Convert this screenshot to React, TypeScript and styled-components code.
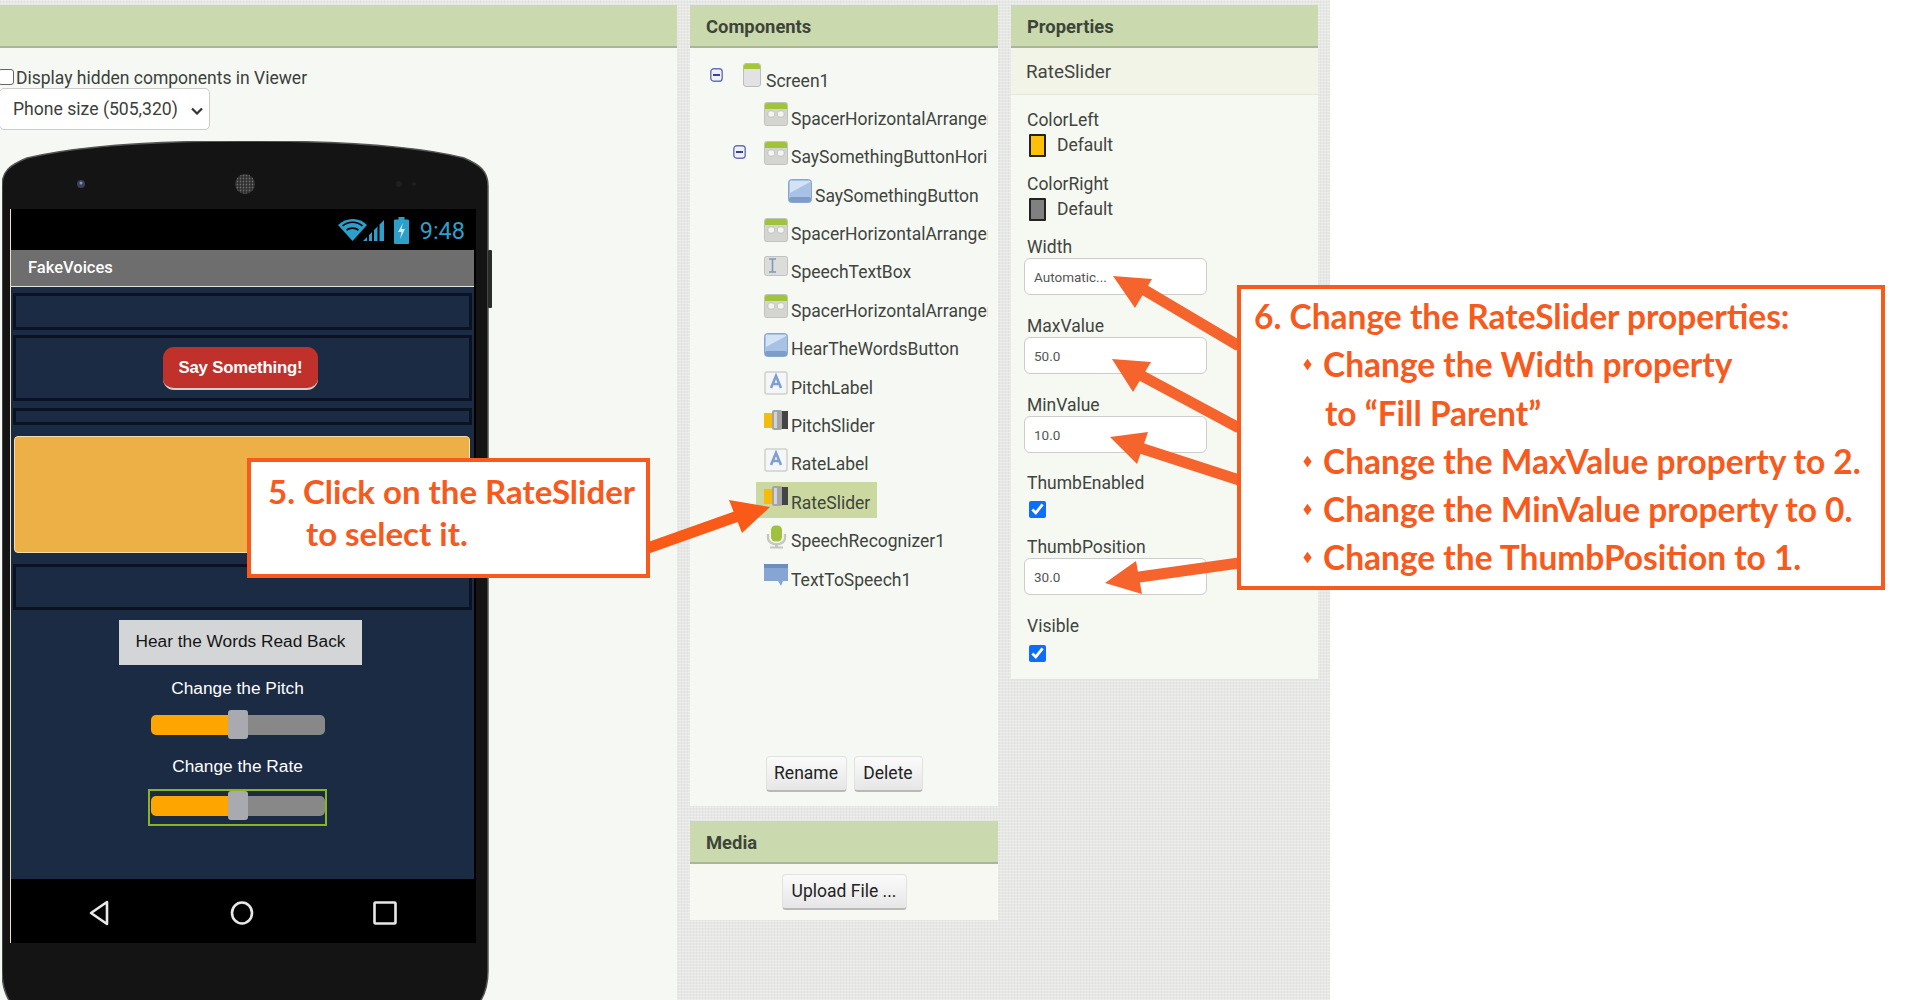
import React from "react";
import styled, { createGlobalStyle, css } from "styled-components";

const Global = createGlobalStyle`
  html, body { margin: 0; padding: 0; background: #fff; }
  #root { width: 1926px; height: 1000px; overflow: hidden; }
  * { box-sizing: border-box; }
`;

const Page = styled.div`
  position: relative;
  width: 1926px;
  height: 1000px;
  overflow: hidden;
  background: #fff;
  font-family: Roboto, "Liberation Sans", sans-serif;
  color: #3f4440;
`;

const Workspace = styled.div`
  width: 1330px;
  height: 1000px;
  padding-top: 5px;
  display: flex;
  align-items: flex-start;
  background-color: #e7e7e5;
  background-image:
    repeating-linear-gradient(0deg, rgba(255,255,255,.28) 0 1px, transparent 1px 3px),
    repeating-linear-gradient(90deg, rgba(150,150,150,.07) 0 1px, transparent 1px 3px);
`;

const Column = styled.div<{ $w: number; $ml?: number }>`
  width: ${p => p.$w}px;
  margin-left: ${p => p.$ml ?? 0}px;
  display: flex;
  flex-direction: column;
`;

const PanelHeader = styled.div`
  height: 43px;
  padding: 1px 0 0 16px;
  display: flex;
  align-items: center;
  background: #cbd9ae;
  border-bottom: 2px solid #aab697;
  font-size: 18.4px;
  font-weight: 700;
  color: #3d4539;
`;

const PanelBody = styled.div<{ $h?: number }>`
  background: #f6f9f3;
  ${p => p.$h !== undefined && css`height: ${p.$h}px;`}
`;

/* Viewer */
const ViewerBody = styled(PanelBody)`
  height: 960px;
  padding-top: 20px;
  overflow: hidden;
`;

const HiddenRow = styled.label`
  display: flex;
  align-items: center;
  height: 20px;
  font-size: 17.5px;
  color: #3b3f3c;
`;

const HiddenCheck = styled.input`
  width: 16px;
  height: 16px;
  margin: 0 2px 2px -2px;
  appearance: none;
  background: #fff;
  border: 1px solid #666;
  border-radius: 3px;
`;

const SizeSelect = styled.select`
  display: block;
  margin: 0 0 0 -1px;
  width: 211px;
  height: 42px;
  padding-left: 13px;
  appearance: none;
  background: #fff url("data:image/svg+xml,%3Csvg xmlns='http://www.w3.org/2000/svg' width='12' height='8'%3E%3Cpath d='M1 1.5l5 5 5-5' fill='none' stroke='%23333' stroke-width='2.2'/%3E%3C/svg%3E") no-repeat 191px 18px;
  border: 1px solid #ccc;
  border-radius: 5px;
  font: 17.6px Roboto, sans-serif;
  color: #3b3f3c;
`;

const Phone = styled.div`
  position: relative;
  margin: 11px 0 0 2px;
  width: 490px;
  height: 880px;
  padding: 68px 0 0 8px;
`;

const PhoneShell = styled.svg`
  position: absolute;
  left: 0;
  top: 0;
`;

const Screen = styled.div`
  position: relative;
  width: 466px;
  background: #000;
  border-left: 1px solid #e7e4bd;
`;

const StatusBar = styled.div`
  height: 41px;
  padding: 2px 11px 0 0;
  display: flex;
  align-items: center;
  justify-content: flex-end;
  gap: 8px;
`;

const Clock = styled.span`
  font-size: 23.5px;
  color: #2d9fc9;
  margin-left: 3px;
`;

const TitleBar = styled.div`
  width: 463px;
  height: 37px;
  padding: 0 0 2px 17px;
  display: flex;
  align-items: center;
  background: #6e6e6e;
  border-bottom: 1px solid #e4e4e4;
  color: #fff;
  font-size: 16.5px;
  font-weight: 500;
`;

const AppBody = styled.div`
  width: 463px;
  height: 592px;
  padding-top: 6px;
  display: flex;
  flex-direction: column;
  background: #1b2b44;
`;

const Arrangement = styled.div<{ $h: number; $mb: number }>`
  height: ${p => p.$h}px;
  margin: 0 2px ${p => p.$mb}px 2px;
  padding-right: 4px;
  flex: none;
  display: flex;
  align-items: center;
  justify-content: center;
  background: #1b2b44;
  border: 3px solid #0b1322;
`;

const RedButton = styled.div`
  width: 155px;
  height: 43px;
  padding-top: 1px;
  display: flex;
  align-items: center;
  justify-content: center;
  background: #c1312c;
  border-radius: 11px;
  border-bottom: 2px solid #d8cfcb;
  color: #fff;
  font: 700 16.8px "Liberation Sans", sans-serif;
  letter-spacing: -0.2px;
`;

const OrangeBox = styled.div`
  height: 117px;
  margin: 0 4px 11px 3px;
  flex: none;
  background: #edb046;
  border: 1px solid #f3dcae;
  border-radius: 4px;
`;

const GrayButton = styled.div`
  width: 243px;
  height: 45px;
  margin: 10px 0 0 108px;
  padding-bottom: 2px;
  flex: none;
  display: flex;
  align-items: center;
  justify-content: center;
  background: #d4d5d7;
  color: #151515;
  font: 17.3px "Liberation Sans", sans-serif;
`;

const SliderCaption = styled.div<{ $mt: number }>`
  width: 179px;
  height: 20px;
  margin: ${p => p.$mt}px 0 0 137px;
  flex: none;
  text-align: center;
  color: #fff;
  font: 17.3px/20px "Liberation Sans", sans-serif;
`;

const SliderFrame = styled.div<{ $sel?: boolean; $mt: number }>`
  position: relative;
  width: 179px;
  height: 37px;
  margin: ${p => p.$mt}px 0 0 137px;
  flex: none;
  display: flex;
  align-items: center;
  justify-content: center;
  border: 2px solid ${p => (p.$sel ? "#8bb51e" : "transparent")};
`;

const Track = styled.div<{ $lift: number }>`
  position: relative;
  width: 174px;
  height: 20px;
  margin-top: ${p => -p.$lift}px;
  background: linear-gradient(90deg, #ffa500 0 45%, #888 45% 100%);
  border-radius: 5px;
`;

const Thumb = styled.div`
  position: absolute;
  left: 77px;
  top: -5px;
  width: 20px;
  height: 29px;
  background: #a9a9b0;
  border-radius: 3px;
`;

const NavBar = styled.div`
  height: 64px;
  padding: 3px 79px 0 76px;
  display: flex;
  align-items: center;
  justify-content: space-between;
  background: #000;
`;

/* Components */
const Tree = styled.div`
  padding-top: 14px;
  height: 708px;
`;

const TreeRow = styled.div<{ $indent: number }>`
  height: 38.4px;
  padding-left: ${p => p.$indent}px;
  display: flex;
  align-items: flex-start;
`;

const Toggle = styled.svg`
  flex: none;
  margin-top: 6px;
`;

const Node = styled.div<{ $sel?: boolean; $ml?: number }>`
  height: 36px;
  margin: -2px 0 0 ${p => p.$ml ?? 0}px;
  padding: 4px 7px 0 8px;
  display: flex;
  align-items: flex-start;
  background: ${p => (p.$sel ? "#cbd9a0" : "transparent")};
`;

const NodeLabel = styled.span<{ $w?: number; $gap: number }>`
  margin: 6.5px 0 0 ${p => p.$gap}px;
  font-size: 17.5px;
  line-height: 20px;
  color: #404440;
  white-space: nowrap;
  ${p => p.$w && css`width: ${p.$w}px; overflow: hidden;`}
`;

const Actions = styled.div`
  height: 50px;
  display: flex;
  justify-content: center;
  gap: 7px;
`;

const SoftButton = styled.button<{ $w: number }>`
  width: ${p => p.$w}px;
  height: 36px;
  padding: 0 0 2px;
  background: linear-gradient(#fbfbfb, #e6e6e6);
  border: 1px solid #e2e2e2;
  border-bottom: 2px solid #b9b9b9;
  border-radius: 4px;
  font: 17.5px Roboto, sans-serif;
  color: #222;
`;

const MediaGap = styled.div`
  height: 15px;
`;

const MediaBody = styled(PanelBody)`
  height: 56px;
  padding-top: 10px;
  display: flex;
  justify-content: center;
  background: #f6f8f1;
`;

/* Properties */
const SubHeader = styled.div`
  height: 47px;
  padding: 1px 0 0 15px;
  display: flex;
  align-items: center;
  background: #f1f4e6;
  border-bottom: 1px solid #e6e8dc;
  font-size: 18.8px;
  color: #444;
`;

const PropList = styled(PanelBody)`
  height: 585px;
  padding: 15px 14px 0;
  display: flex;
  flex-direction: column;
  border-bottom: 1px solid #e2e4dc;
  background: #f6f8f2;
`;

const PropLabel = styled.div<{ $mt?: number }>`
  height: 20px;
  margin: ${p => p.$mt ?? 0}px 0 0 2px;
  font-size: 17.5px;
  line-height: 20px;
  color: #404440;
  flex: none;
`;

const ColorRow = styled.div`
  height: 24px;
  margin-top: 3px;
  padding-left: 4px;
  display: flex;
  align-items: center;
  font-size: 17.5px;
  flex: none;
`;

const Swatch = styled.span<{ $c: string }>`
  width: 17px;
  height: 23px;
  margin-right: 11px;
  background: ${p => p.$c};
  border: 2px solid #222;
  border-radius: 1px;
`;

const PropInput = styled.input`
  flex: none;
  width: 183px;
  height: 37px;
  margin: 1px 0 1px -1px;
  padding: 0 9px;
  background: #fff;
  border: 1px solid #ccc;
  border-radius: 6px;
  font: 13.5px Roboto, sans-serif;
  color: #555;
`;

const PropCheck = styled.input<{ $mt: number }>`
  flex: none;
  width: 17px;
  height: 17px;
  margin: ${p => p.$mt}px 0 0 4px;
  accent-color: #0d6efd;
`;

/* Annotations */
const Arrows = styled.svg`
  position: absolute;
  left: 0;
  top: 0;
  pointer-events: none;
`;

const Callout = styled.div`
  position: absolute;
  background: #fff;
  border: 4px solid #f75a1c;
  color: #f75a1c;
  font-family: Lato, "Open Sans", sans-serif;
  font-weight: 700;
`;

const CalloutFive = styled(Callout)`
  left: 247px;
  top: 458px;
  width: 403px;
  height: 120px;
  padding: 8px 0 0 17px;
  line-height: 42px;
  font-size: 33px;
`;

const CalloutLine = styled.div<{ $indent?: number }>`
  padding-left: ${p => p.$indent ?? 0}px;
  white-space: nowrap;
`;

const CalloutSix = styled(Callout)`
  left: 1237px;
  top: 285px;
  width: 648px;
  height: 305px;
  padding: 3px 0 0 13px;
  line-height: 48.3px;
  font-size: 33.5px;
`;

const BulletLine = styled.div<{ $bare?: boolean }>`
  position: relative;
  padding-left: ${p => (p.$bare ? 71 : 69)}px;
  white-space: nowrap;
  ${p => !p.$bare && css`
    &::before {
      content: "";
      position: absolute;
      left: 50px;
      top: 21px;
      width: 7px;
      height: 7px;
      background: #f75a1c;
      transform: rotate(45deg) skew(10deg, 10deg);
    }
  `}
`;

/* Icons */
const Ic = styled.svg`
  flex: none;
  display: block;
`;

const ToggleIcon = () => (
  <Toggle width="13" height="14" viewBox="0 0 13 14">
    <rect x="0.8" y="0.8" width="11.4" height="12.4" rx="3" fill="#eef0fa" stroke="#6a70b8" strokeWidth="1.4" />
    <rect x="3" y="6" width="7" height="2" fill="#3c4296" />
  </Toggle>
);

type Kind = "screen" | "arrange" | "button" | "text" | "label" | "slider" | "speech" | "tts";

const NodeIcon = ({ kind }: { kind: Kind }) => {
  if (kind === "screen")
    return (
      <Ic width="18" height="24" viewBox="0 0 18 24" style={{ marginTop: -1 }}>
        <rect x="0.5" y="0.5" width="17" height="23" rx="2.5" fill="#e2e2e2" stroke="#bdbdbd" />
        <path d="M1 6V3a2 2 0 0 1 2-2h12a2 2 0 0 1 2 2v3z" fill="#a4c639" />
      </Ic>
    );
  if (kind === "arrange")
    return (
      <Ic width="24" height="24" viewBox="0 0 24 24">
        <rect x="0.5" y="0.5" width="23" height="23" rx="2" fill="#d4d5d1" stroke="#c2c3bf" />
        <path d="M1 7V3a2 2 0 0 1 2-2h18a2 2 0 0 1 2 2v4z" fill="#9fc43a" />
        <rect x="4" y="9" width="6.5" height="6" rx="2" fill="#f4f4f2" stroke="#b4b5b1" strokeWidth="0.6" />
        <rect x="13.5" y="9" width="6.5" height="6" rx="2" fill="#f4f4f2" stroke="#b4b5b1" strokeWidth="0.6" />
      </Ic>
    );
  if (kind === "button")
    return (
      <Ic width="24" height="24" viewBox="0 0 24 24">
        <rect x="0.5" y="0.5" width="23" height="23" rx="3" fill="#a8c2e6" stroke="#8aa6cc" />
        <path d="M2 14 L22 3 V2 H2z" fill="#d4e2f4" />
        <rect x="1" y="18" width="22" height="5" rx="2" fill="#7d9cc8" />
      </Ic>
    );
  if (kind === "text")
    return (
      <Ic width="24" height="20" viewBox="0 0 24 20">
        <rect x="0.5" y="0.5" width="23" height="19" rx="2" fill="#dcddd9" stroke="#c2c3bf" />
        <path d="M5 3h7M8.5 3v13M5 16h7" stroke="#7e97bd" strokeWidth="1.6" fill="none" />
      </Ic>
    );
  if (kind === "label")
    return (
      <Ic width="24" height="24" viewBox="0 0 24 24">
        <rect x="1" y="1" width="22" height="22" rx="2" fill="#f4f6f8" stroke="#cfd1cd" strokeWidth="1.5" />
        <path d="M7 17 L12 5 L17 17 M9 13h6" stroke="#7e9fd0" strokeWidth="2.6" fill="none" />
      </Ic>
    );
  if (kind === "slider")
    return (
      <Ic width="24" height="20" viewBox="0 0 24 20">
        <rect x="0" y="3" width="9" height="15" fill="#f4bc0c" />
        <rect x="16" y="1" width="8" height="18" fill="#444" />
        <rect x="8" y="0" width="10" height="20" rx="2" fill="#a4a4a4" />
        <rect x="10" y="2" width="3" height="16" fill="#d4d4d4" />
      </Ic>
    );
  if (kind === "speech")
    return (
      <Ic width="24" height="24" viewBox="0 0 24 24">
        <rect x="7" y="0.5" width="11" height="16" rx="4.5" fill="#a0c040" />
        <path d="M4 9v4a8 6 0 0 0 17 0V9" stroke="#c4c8c0" strokeWidth="2.4" fill="none" />
        <rect x="11" y="18" width="3" height="4" fill="#c4c8c0" />
        <rect x="6" y="21.5" width="13" height="2" fill="#c4c8c0" />
      </Ic>
    );
  return (
    <Ic width="24" height="24" viewBox="0 0 24 24">
      <path d="M0 1h24v17H19l-2 5-3-5H0z" fill="#86a5d2" />
      <rect x="0" y="1" width="24" height="4" fill="#6d8fc0" />
    </Ic>
  );
};

type Item = { label: string; kind: Kind; level: number; toggle?: boolean; sel?: boolean; w?: number };

const items: Item[] = [
  { label: "Screen1", kind: "screen", level: 0, toggle: true },
  { label: "SpacerHorizontalArrangement1", kind: "arrange", level: 1, w: 197 },
  { label: "SaySomethingButtonHorizontalArrangement", kind: "arrange", level: 1, toggle: true, w: 197 },
  { label: "SaySomethingButton", kind: "button", level: 2 },
  { label: "SpacerHorizontalArrangement2", kind: "arrange", level: 1, w: 197 },
  { label: "SpeechTextBox", kind: "text", level: 1 },
  { label: "SpacerHorizontalArrangement3", kind: "arrange", level: 1, w: 197 },
  { label: "HearTheWordsButton", kind: "button", level: 1 },
  { label: "PitchLabel", kind: "label", level: 1 },
  { label: "PitchSlider", kind: "slider", level: 1 },
  { label: "RateLabel", kind: "label", level: 1 },
  { label: "RateSlider", kind: "slider", level: 1, sel: true },
  { label: "SpeechRecognizer1", kind: "speech", level: 1 },
  { label: "TextToSpeech1", kind: "tts", level: 1 },
];

const TreeItem = ({ it }: { it: Item }) => {
  const indent = it.toggle ? (it.level === 0 ? 20 : 43) : it.level === 2 ? 90 : 66;
  return (
    <TreeRow $indent={indent}>
      {it.toggle && <ToggleIcon />}
      <Node $sel={it.sel} $ml={it.toggle ? (it.level === 0 ? 12 : 10) : 0}>
        <NodeIcon kind={it.kind} />
        <NodeLabel $w={it.w} $gap={it.level === 0 ? 5 : 3}>{it.label}</NodeLabel>
      </Node>
    </TreeRow>
  );
};

const Slider = ({ sel, mt }: { sel?: boolean; mt: number }) => (
  <SliderFrame $sel={sel} $mt={mt}>
    <Track $lift={sel ? 4 : 2}>
      <Thumb />
    </Track>
  </SliderFrame>
);

const StatusIcons = () => (
  <>
    <Ic width="48" height="26" viewBox="0 0 48 26">
      <path d="M0 7 C8 -1 22 -1 29 7 L14.5 23z" fill="#2d9fc9" />
      <path d="M4.5 8 C10 3 19 3 24.5 8 M8.5 12 C12 9.5 17 9.5 20.5 12" stroke="#000" strokeWidth="1.6" fill="none" />
      <path d="M25 23 L29 19 V23z M31 23 V17 L34 14 V23z M36 23 V12 L39.5 8.5 V23z M41.5 23 V6.5 L46 2 V23z" fill="#2d9fc9" />
    </Ic>
    <Ic width="15" height="27" viewBox="0 0 15 27">
      <rect x="4.5" y="0" width="6" height="3" fill="#2d9fc9" />
      <rect x="0" y="2.5" width="15" height="24.5" rx="1" fill="#2d9fc9" />
      <path d="M9 6 L4 15 H7.5 L6 22 L11 12 H7.5z" fill="#cfeaf3" />
    </Ic>
  </>
);

const Shell = () => (
  <PhoneShell width="490" height="880" viewBox="0 0 490 880">
    <defs>
      <pattern id="mesh" width="3" height="3" patternUnits="userSpaceOnUse">
        <rect width="3" height="3" fill="#2e2e2e" />
        <circle cx="1.5" cy="1.5" r="0.9" fill="#6a6a6a" />
      </pattern>
    </defs>
    <path
      d="M0 45 C0 30 8 24 25 17 C80 4 160 0 243 0 C330 0 410 4 462 17 C478 24 486 30 486 45 L486 830 C486 858 470 878 450 878 L36 878 C16 878 0 858 0 830 Z"
      fill="#141414"
      stroke="#555"
      strokeWidth="1.5"
    />
    <rect x="486" y="109" width="4" height="58" rx="1" fill="#2a2a2a" />
    <circle cx="79" cy="43" r="4" fill="#3b3f58" />
    <circle cx="79" cy="42" r="1.5" fill="#8a90b8" />
    <circle cx="243" cy="43" r="10" fill="url(#mesh)" />
    <circle cx="397" cy="43" r="3" fill="#1f1f1f" />
    <circle cx="412" cy="43" r="2" fill="#1f1f1f" />
  </PhoneShell>
);

const arrows = [
  { c: "#f95a17", tail: "645,549 752,511", w: 11, head: "770,507 729,500 742,533" },
  { c: "#f4642c", tail: "1239,346 1136,285", w: 11, head: "1113,276 1152,279 1135,308" },
  { c: "#f4642c", tail: "1239,428 1131,370", w: 11, head: "1112,359 1151,362 1133,392" },
  { c: "#f4642c", tail: "1239,480 1128,444", w: 11, head: "1110,437 1148,432 1137,464" },
  { c: "#f4642c", tail: "1239,563 1125,579", w: 11, head: "1105,583 1136,561 1142,594" },
];

export default function App() {
  return (
    <Page>
      <Global />
      <Workspace>
        <Column $w={677}>
          <PanelHeader />
          <ViewerBody>
            <HiddenRow>
              <HiddenCheck type="checkbox" />
              Display hidden components in Viewer
            </HiddenRow>
            <SizeSelect defaultValue="phone">
              <option value="phone">Phone size (505,320)</option>
            </SizeSelect>
            <Phone>
              <Shell />
              <Screen>
                <StatusBar>
                  <StatusIcons />
                  <Clock>9:48</Clock>
                </StatusBar>
                <TitleBar>FakeVoices</TitleBar>
                <AppBody>
                  <Arrangement $h={37} $mb={5} />
                  <Arrangement $h={66} $mb={7}>
                    <RedButton>Say Something!</RedButton>
                  </Arrangement>
                  <Arrangement $h={17} $mb={11} />
                  <OrangeBox />
                  <Arrangement $h={46} $mb={0} />
                  <GrayButton>Hear the Words Read Back</GrayButton>
                  <SliderCaption $mt={13}>Change the Pitch</SliderCaption>
                  <Slider mt={9} />
                  <SliderCaption $mt={12}>Change the Rate</SliderCaption>
                  <Slider sel mt={13} />
                </AppBody>
                <NavBar>
                  <Ic width="24" height="28" viewBox="0 0 24 28">
                    <path d="M20 3 V25 L4 14z" fill="none" stroke="#e8e8e8" strokeWidth="2.6" strokeLinejoin="round" />
                  </Ic>
                  <Ic width="26" height="26" viewBox="0 0 26 26">
                    <ellipse cx="13" cy="13" rx="10" ry="10.5" fill="none" stroke="#e8e8e8" strokeWidth="2.6" />
                  </Ic>
                  <Ic width="24" height="24" viewBox="0 0 24 24">
                    <rect x="1.5" y="1.5" width="21" height="21" rx="1" fill="none" stroke="#e8e8e8" strokeWidth="2.6" />
                  </Ic>
                </NavBar>
              </Screen>
            </Phone>
          </ViewerBody>
        </Column>

        <Column $w={308} $ml={13}>
          <PanelHeader>Components</PanelHeader>
          <PanelBody $h={758}>
            <Tree>
              {items.map(it => (
                <TreeItem key={it.label} it={it} />
              ))}
            </Tree>
            <Actions>
              <SoftButton $w={81}>Rename</SoftButton>
              <SoftButton $w={69}>Delete</SoftButton>
            </Actions>
          </PanelBody>
          <MediaGap />
          <PanelHeader>Media</PanelHeader>
          <MediaBody>
            <SoftButton $w={125}>Upload File ...</SoftButton>
          </MediaBody>
        </Column>

        <Column $w={307} $ml={13}>
          <PanelHeader>Properties</PanelHeader>
          <SubHeader>RateSlider</SubHeader>
          <PropList>
            <PropLabel>ColorLeft</PropLabel>
            <ColorRow>
              <Swatch $c="#ffc107" />
              Default
            </ColorRow>
            <PropLabel $mt={17}>ColorRight</PropLabel>
            <ColorRow>
              <Swatch $c="#808080" />
              Default
            </ColorRow>
            <PropLabel $mt={16}>Width</PropLabel>
            <PropInput readOnly value="Automatic..." />
            <PropLabel $mt={20}>MaxValue</PropLabel>
            <PropInput readOnly value="50.0" />
            <PropLabel $mt={20}>MinValue</PropLabel>
            <PropInput readOnly value="10.0" />
            <PropLabel $mt={19}>ThumbEnabled</PropLabel>
            <PropCheck type="checkbox" defaultChecked $mt={8} />
            <PropLabel $mt={19}>ThumbPosition</PropLabel>
            <PropInput readOnly value="30.0" />
            <PropLabel $mt={20}>Visible</PropLabel>
            <PropCheck type="checkbox" defaultChecked $mt={9} />
          </PropList>
        </Column>
      </Workspace>

      <Arrows width="1926" height="1000" viewBox="0 0 1926 1000">
        {arrows.map(a => (
          <g key={a.head}>
            <polyline points={a.tail} stroke={a.c} strokeWidth={a.w} fill="none" />
            <polygon points={a.head} fill={a.c} />
          </g>
        ))}
      </Arrows>

      <CalloutFive>
        <CalloutLine>5. Click on the RateSlider</CalloutLine>
        <CalloutLine $indent={38}>to select it.</CalloutLine>
      </CalloutFive>
      <CalloutSix>
        <CalloutLine>6. Change the RateSlider properties:</CalloutLine>
        <BulletLine>Change the Width property</BulletLine>
        <BulletLine $bare>to “Fill Parent”</BulletLine>
        <BulletLine>Change the MaxValue property to 2.</BulletLine>
        <BulletLine>Change the MinValue property to 0.</BulletLine>
        <BulletLine>Change the ThumbPosition to 1.</BulletLine>
      </CalloutSix>
    </Page>
  );
}
